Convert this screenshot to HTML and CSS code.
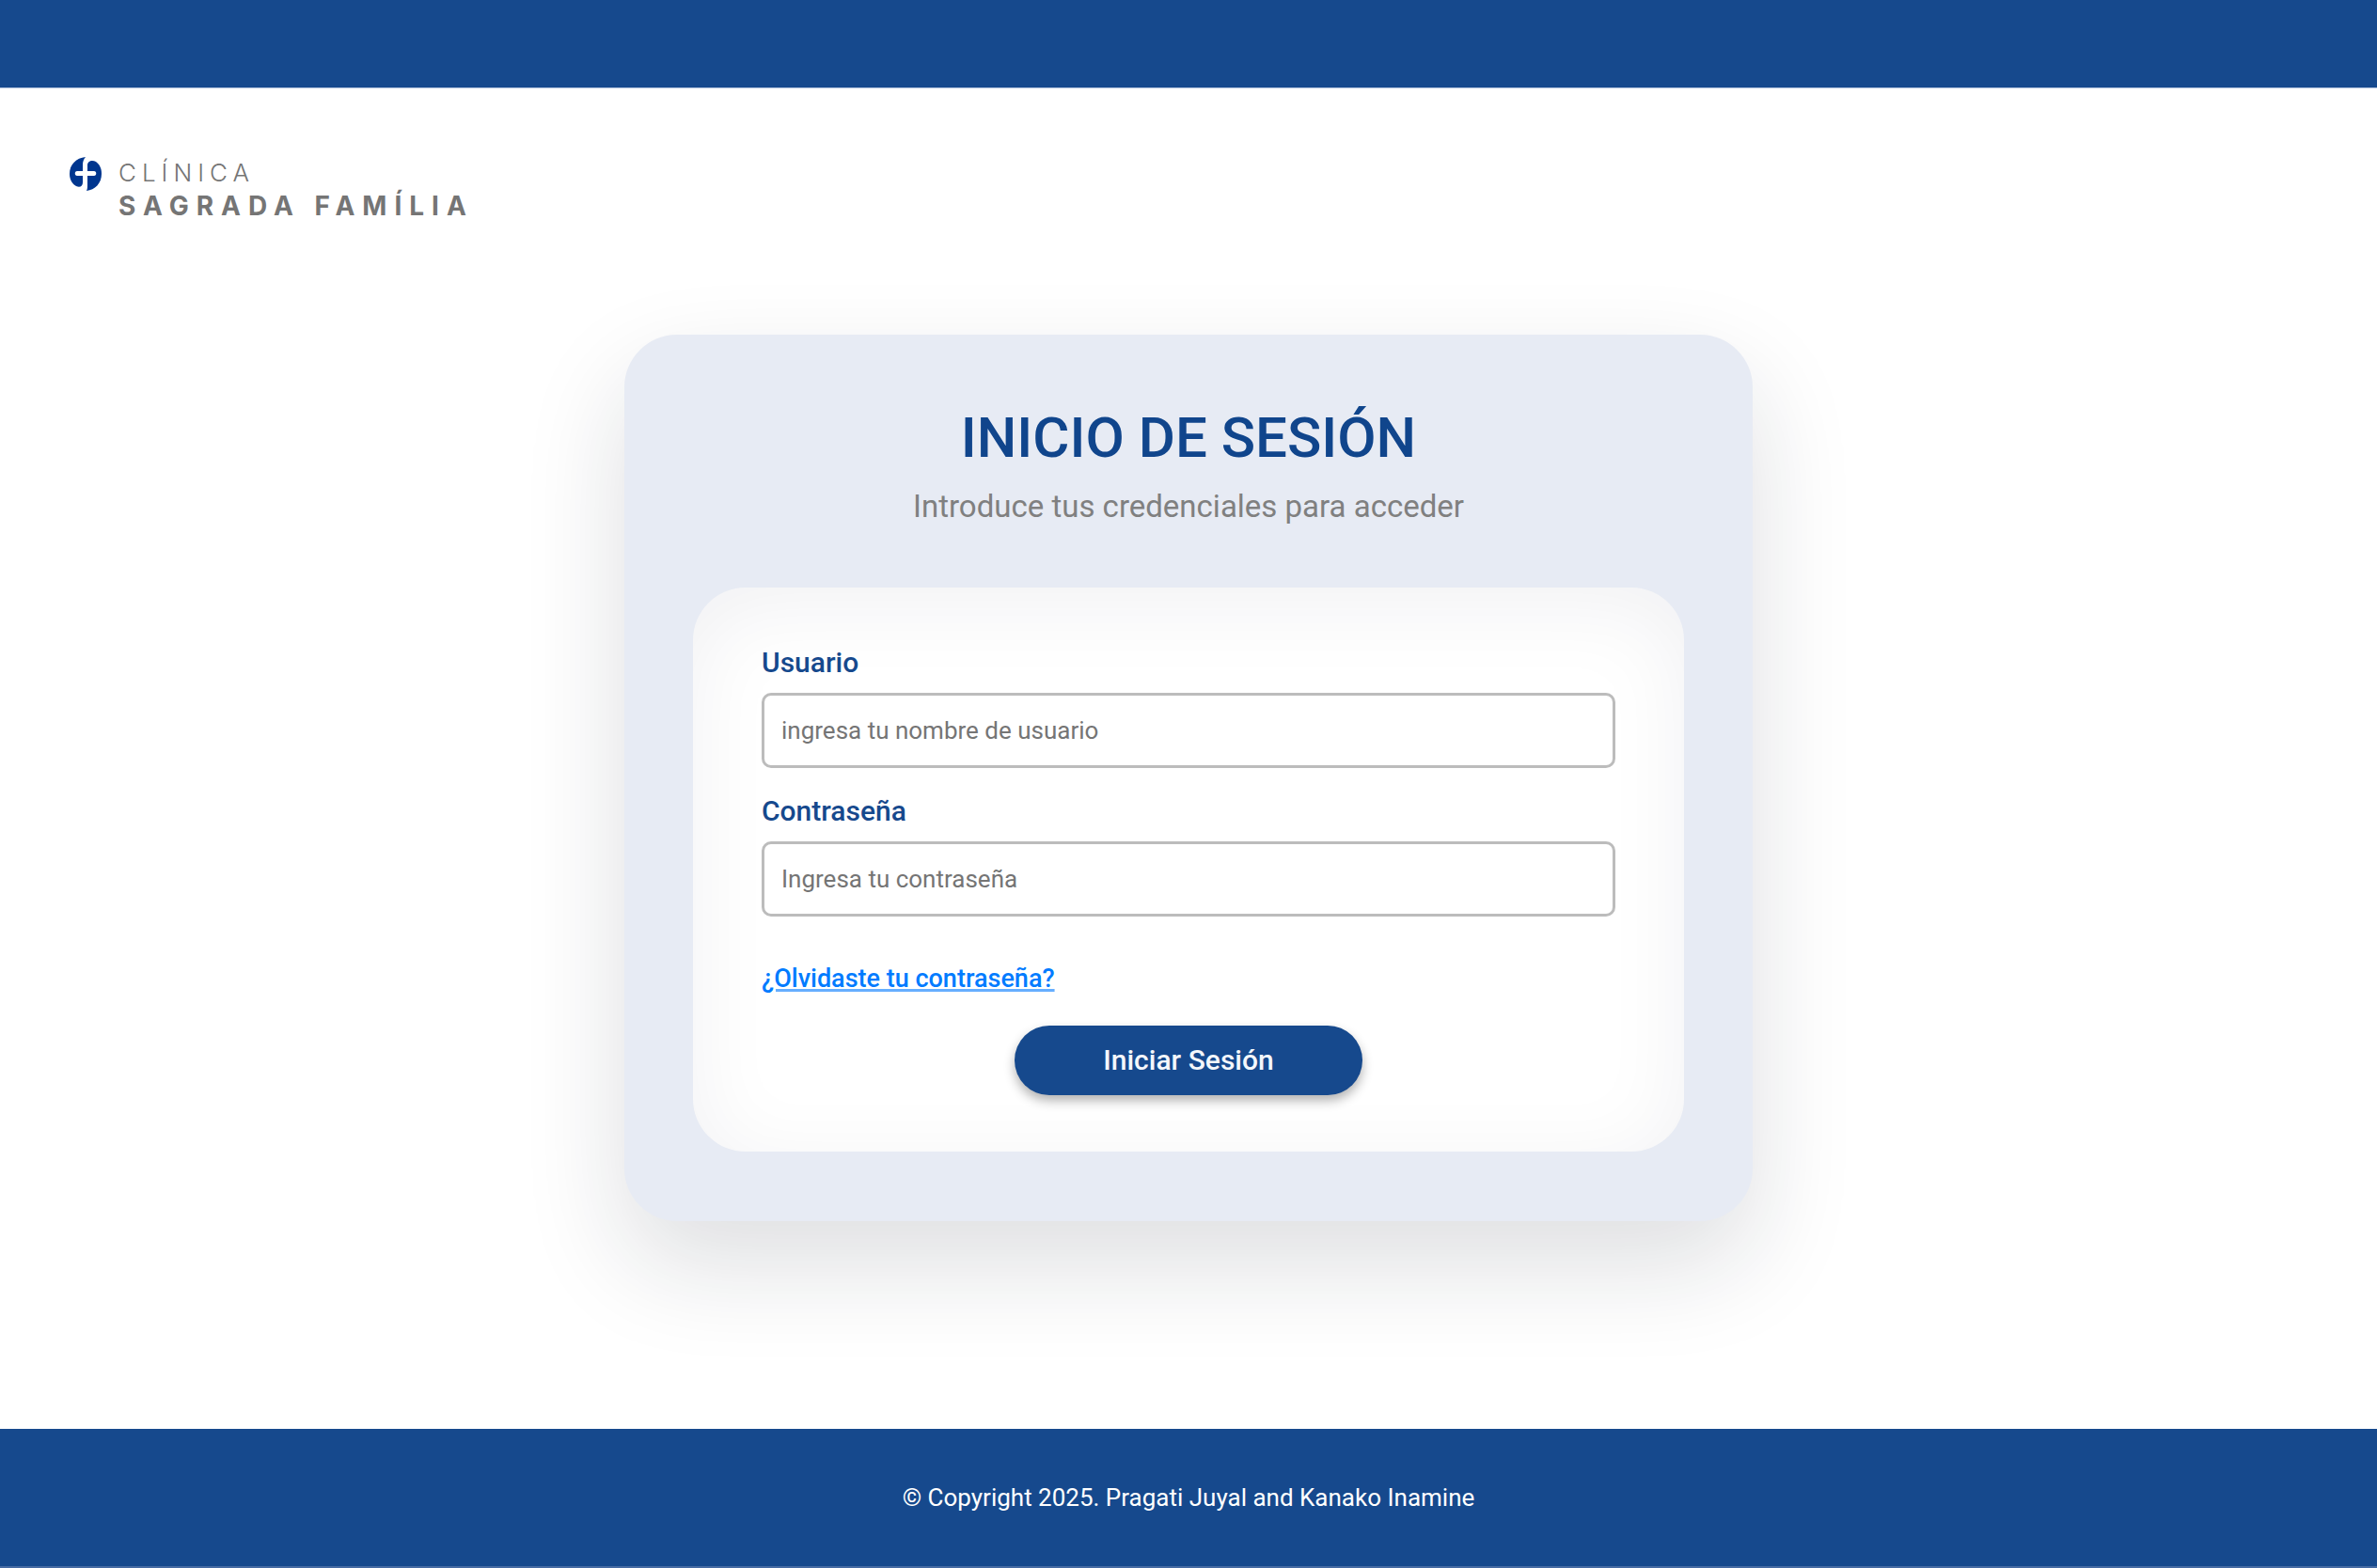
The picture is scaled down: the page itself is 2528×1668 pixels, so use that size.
FILE: index.html
```html
<!DOCTYPE html>
<html lang="es">
<head>
<meta charset="utf-8">
<title>Clínica Sagrada Família – Inicio de sesión</title>
<link rel="stylesheet" href="styles.css">
</head>
<body>
<header class="topbar"></header>
<main class="page">
  <div class="logo">
    <svg class="logo-mark" viewBox="0 0 34 36" aria-hidden="true">
      <path fill="#00368f" d="M17 0C7 1 0 8 0 18c0 6 3 11 7 13 4 2 7 0 7-4v-7H8c-3 0-3-5 0-5h6V8c0-3 1-6 3-8z"/>
      <path fill="#00368f" d="M18 36c9-1 16-8 16-18 0-6-2-10-6-13-4-2-9-1-9 4v6h7c3 0 3 5 0 5h-7v9c0 3 0 5-1 7z"/>
    </svg>
    <div class="logo-text">
      <span class="logo-top">CLÍNICA</span>
      <span class="logo-bottom">SAGRADA FAMÍLIA</span>
    </div>
  </div>
  <section class="card">
    <h1 class="title">INICIO DE SESIÓN</h1>
    <p class="subtitle">Introduce tus credenciales para acceder</p>
    <form class="form">
      <label class="label" for="user">Usuario</label>
      <input class="input" id="user" type="text" placeholder="ingresa tu nombre de usuario">
      <label class="label" for="pass">Contraseña</label>
      <input class="input" id="pass" type="password" placeholder="Ingresa tu contraseña">
      <a class="forgot" href="#">¿Olvidaste tu contraseña?</a>
      <button class="submit" type="button">Iniciar Sesión</button>
    </form>
  </section>
</main>
<footer class="footer">© Copyright 2025. Pragati Juyal and Kanako Inamine</footer>
</body>
</html>
```
FILE: styles.css
```css
* { box-sizing: border-box; }
body {
  margin: 0;
  min-height: 100vh;
  display: flex;
  flex-direction: column;
  background: #fff;
  font-family: Roboto, "Liberation Sans", sans-serif;
}
.topbar { height: 94px; border-bottom: 1px solid #a9bcd8; background: #16498d; }
.page { flex: 1; padding: 73px 74px 0; }
.logo { display: flex; gap: 18px; align-items: flex-start; color: #757575; }
.logo-mark { width: 34px; height: 36px; }
.logo-text { display: flex; flex-direction: column; font-family: Inter, sans-serif; }
.logo-top { font-size: 26px; line-height: 34px; font-weight: 300; letter-spacing: 6px; }
.logo-bottom { font-size: 28px; line-height: 36px; font-weight: 700; letter-spacing: 8px; }
.card {
  max-width: 1200px;
  margin: 119px auto 0;
  padding: 74px 73px;
  border-radius: 56px;
  background: #e7ebf4;
  box-shadow: 0 46px 110px rgba(20, 25, 45, 0.14);
  text-align: center;
}
.title { margin: 0; font-size: 60px; line-height: 72px; font-weight: 500; color: #10458c; }
.subtitle { margin: 17px 0 66px; font-size: 33px; line-height: 40px; color: #808080; }
.form {
  display: flex;
  flex-direction: column;
  padding: 62px 73px 60px;
  border-radius: 56px;
  background: #fff;
  box-shadow: inset 0 18px 92px rgba(20, 25, 45, 0.06);
  text-align: left;
}
.label { margin-bottom: 14px; font-size: 30px; line-height: 36px; font-weight: 500; color: #16498d; }
.input {
  height: 80px;
  margin-bottom: 28px;
  padding: 0 18px;
  border: 3px solid #bcbcbc;
  border-radius: 10px;
  background: #fff;
  font-family: inherit;
  font-size: 26px;
  color: #333;
}
.input::placeholder { color: #757575; opacity: 1; }
.forgot {
  align-self: flex-start;
  margin: 20px 0 32px;
  font-size: 27px;
  line-height: 36px;
  font-weight: 500;
  color: #007bff;
  text-decoration-color: #66aeff;
  text-decoration-thickness: 3px;
}
.submit {
  align-self: center;
  width: 370px;
  height: 74px;
  padding: 0 0 2px;
  border: 0;
  border-radius: 37px;
  background: #16498d;
  box-shadow: 0 6px 12px rgba(0, 0, 0, 0.3);
  font-family: inherit;
  font-size: 30px;
  font-weight: 500;
  color: #f4f7fb;
}
.footer {
  height: 148px;
  border-bottom: 2px solid #466ba3;
  background: #16498d;
  color: #fff;
  font-size: 26px;
  line-height: 146px;
  text-align: center;
}
```
